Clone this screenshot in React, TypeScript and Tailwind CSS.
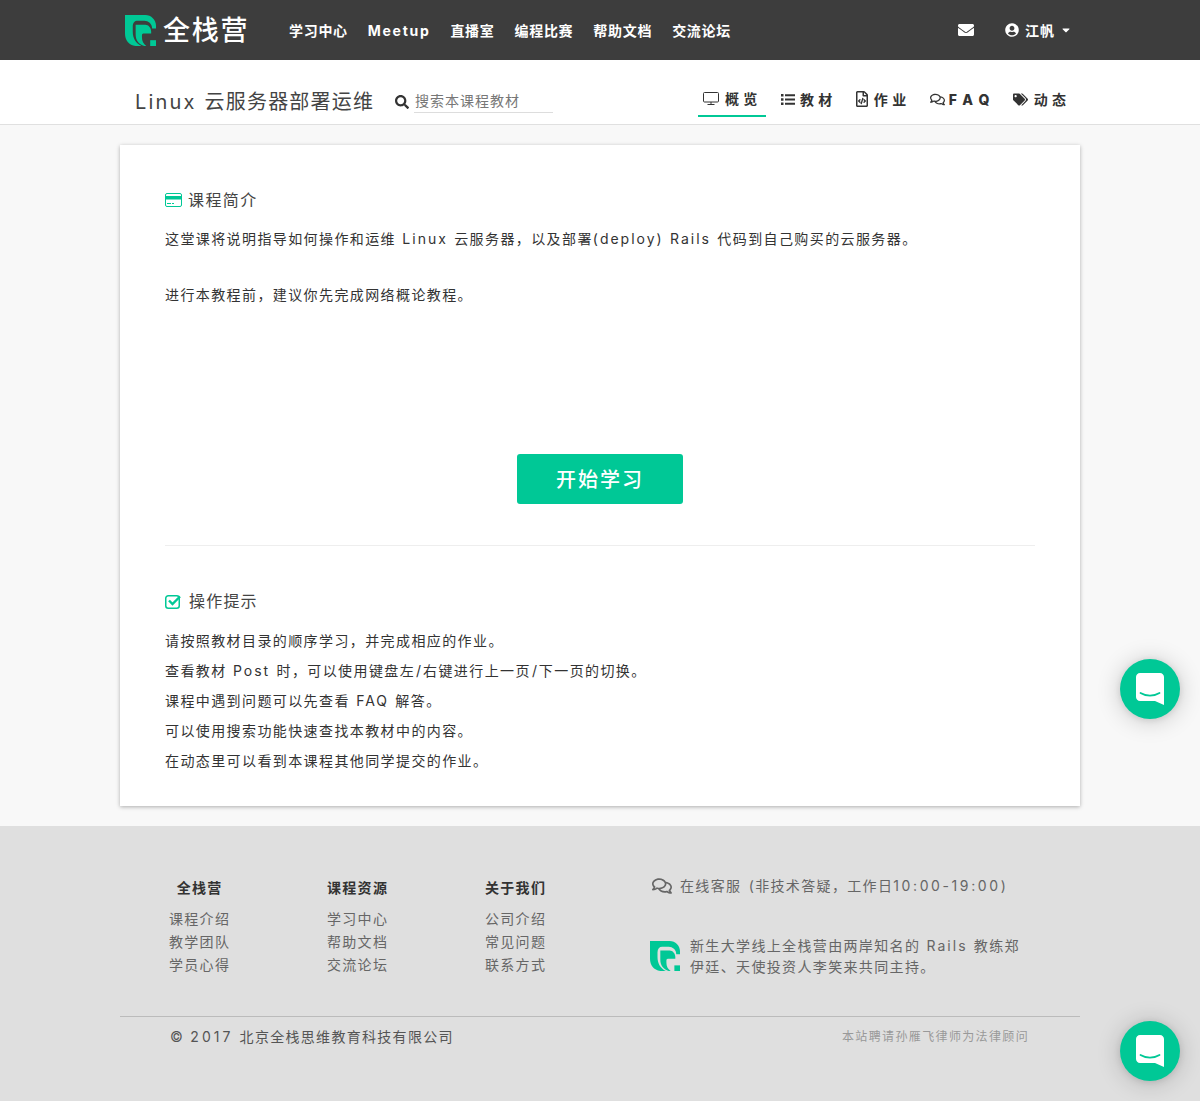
import React from "react";
import { FaEnvelope, FaSearch, FaTags, FaRegFileCode, FaRegComments, FaUserCircle, FaCaretDown } from "react-icons/fa";

const FONT = '"Inter", "Noto Sans CJK SC", sans-serif';

function Logo({ size }: { size: number }) {
  return (
    <svg width={size} height={size} viewBox="0 0 32 32">
      <path fill="#00c896" d="M0 0 H21 C27 0 32 5 32 11 V14 H28 C28 9 24 6 20 6 H13 C10 6 8 8 8 12 V17 C8 24 11 29 17 32 H11 C4 31 0 26 0 19 Z" />
      <path fill="#00c896" d="M11 10 H21 C24 10 27 13 27 17 V19 H19 C18 19 17.500 20 17.500 21 V23 C17.500 27 19 30 22 32 H20 C14 30 11 26 11 20 Z" />
      <rect x="26" y="26" width="6" height="6" fill="#00c896" />
    </svg>
  );
}

function Chat({ className }: { className: string }) {
  return (
    <div className={"absolute left-[1120px] w-[60px] h-[60px] rounded-full bg-[#00c896] flex items-center justify-center shadow-[0_1px_6px_rgba(0,0,0,0.1),0_2px_24px_rgba(0,0,0,0.2)] " + className}>
      <svg width="28" height="32" viewBox="0 0 28 32">
        <path fill="#fff" d="M4 0 H24 C26.200 0 28 1.800 28 4 V32 L19 28 H4 C1.800 28 0 26.200 0 24 V4 C0 1.800 1.800 0 4 0 Z" />
        <path fill="none" stroke="#00c896" strokeWidth="1.800" strokeLinecap="round" d="M4.500 20 C10 23.500 18 23.500 23.500 20" />
      </svg>
    </div>
  );
}

function L({ children }: { children: React.ReactNode }) {
  return <span className="tracking-[2px]">{children}</span>;
}

function S() {
  return <span className="ml-[1px] mr-[0.5px]">/</span>;
}

function Tab({ icon, label, className }: { icon: React.ReactNode; label: React.ReactNode; className: string }) {
  return (
    <div className={"flex items-center h-[36px] text-[14px] font-bold text-[#333] tracking-[0.5px] " + className}>
      {icon}
      <span>{label}</span>
    </div>
  );
}

function FooterCol({ title, items, className }: { title: string; items: string[]; className: string }) {
  return (
    <div className={"absolute top-[50px] " + className}>
      <div className="h-[31px] text-[14px] font-bold text-[#333] tracking-[1.3px] leading-[24px] text-center">{title}</div>
      {items.map((t) => (
        <div key={t} className="h-[23px] text-[14px] text-[#666] tracking-[1.3px] leading-[23px]">{t}</div>
      ))}
    </div>
  );
}

export default function App() {
  return (
    <div className="relative h-[1101px] overflow-hidden bg-[#f8f8f8]" style={{ fontFamily: FONT }}>
      <header className="h-[60px] bg-[#3d3d3d] flex items-center pl-[125px] text-white">
        <Logo size={31} />
        <span className="ml-[7px] text-[27px] font-medium tracking-[1.7px] w-[89px] leading-none whitespace-nowrap">全栈营</span>
        <nav className="ml-[37px] flex gap-[20px] text-[14px] font-bold tracking-[0.7px]">
          <span>学习中心</span>
          <span className="tracking-[1.7px]">Meetup</span>
          <span>直播室</span>
          <span>编程比赛</span>
          <span>帮助文档</span>
          <span>交流论坛</span>
        </nav>
        <FaEnvelope className="ml-[227px] text-[16px]" />
        <FaUserCircle className="ml-[31px] text-[14px]" />
        <span className="ml-[6px] text-[14px] font-bold tracking-[1px]">江帆</span>
        <FaCaretDown className="ml-[5px] text-[12px]" />
      </header>

      <div className="h-[65px] bg-white border-b border-[#e0e0e0] flex items-start pl-[135px]">
        <h1 className="mt-[27px] text-[20px] leading-[30px] text-[#444] tracking-[1.2px] w-[260px] whitespace-nowrap">
          <span className="tracking-[2.2px]">Linux</span>
          <span className="ml-[1px]"> 云服务器部署运维</span>
        </h1>
        <FaSearch className="mt-[35px] text-[14px] text-[#333]" />
        <div className="ml-[5px] mt-[31px] w-[139px] h-[22px] border-b border-[#ddd] text-[14px] leading-[20px] text-[#777] tracking-[1px] pl-[1px]">搜索本课程教材</div>
        <div className="ml-[145px] mt-[21px] flex">
          <Tab
            className="w-[68px] border-b-2 border-[#00c896] pl-[5px]"
            icon={
              <svg width="16" height="13" viewBox="0 0 16 13" className="mr-[6px]">
                <rect x="0.500" y="0.500" width="15" height="9.500" rx="1" fill="none" stroke="#333" />
                <path d="M8 10 V12 M4.500 12.500 H11.500" stroke="#333" fill="none" />
              </svg>
            }
            label="概 览"
          />
          <Tab
            className="ml-[15px]"
            icon={
              <svg width="14" height="11" viewBox="0 0 14 11" className="mr-[5px]">
                <path fill="#333" d="M0 0 H2.500 V2.500 H0 Z M0 4.200 H2.500 V6.700 H0 Z M0 8.400 H2.500 V10.900 H0 Z M4 0.300 H14 V2.300 H4 Z M4 4.500 H14 V6.500 H4 Z M4 8.700 H14 V10.700 H4 Z" />
              </svg>
            }
            label="教 材"
          />
          <Tab className="ml-[21px]" icon={<FaRegFileCode className="text-[16px] mr-[4px]" />} label="作 业" />
          <Tab className="ml-[23px]" icon={<FaRegComments className="text-[15px] mr-[4px]" />} label={<span className="tracking-[1.2px] font-extrabold">F A Q</span>} />
          <Tab className="ml-[22px]" icon={<FaTags className="text-[15px] mr-[6px]" />} label="动 态" />
        </div>
      </div>

      <main className="mx-[120px] mt-[20px] h-[661px] bg-white shadow-[0_1px_4px_rgba(0,0,0,0.3)] px-[45px] pt-[44px]">
        <div className="flex items-center h-[22px] text-[16px] text-[#444] tracking-[1.4px]">
          <svg width="17" height="14" viewBox="0 0 17 14" className="mr-[7px]">
            <rect x="0.500" y="0.500" width="16" height="13" rx="1.500" fill="none" stroke="#00c896" />
            <rect x="0" y="3" width="17" height="3.500" fill="#00c896" />
            <rect x="2" y="10" width="4" height="1" fill="#00c896" />
            <rect x="7" y="10" width="2" height="1" fill="#00c896" />
          </svg>
          <span className="-ml-[1px]">课程简介</span>
        </div>
        <div className="[word-spacing:1px] text-[14px] leading-[20px] text-[#333] tracking-[1.4px]">
          <p className="mt-[18px]">这堂课将说明指导如何操作和运维 <L>Linux</L> 云服务器，以及部署<L>(deploy)</L> <L>Rails</L> 代码到自己购买的云服务器。</p>
          <p className="mt-[36px]">进行本教程前，建议你先完成网络概论教程。</p>
        </div>

        <div className="mt-[149px] flex justify-center">
          <div className="w-[166px] h-[50px] pt-[2px] rounded-[3px] bg-[#00c896] text-white text-[20px] font-medium tracking-[2px] flex items-center justify-center">开始学习</div>
        </div>
        <div className="mt-[41px] border-t border-[#eee]" />

        <div className="mt-[44px] flex items-center h-[22px] text-[16px] text-[#444] tracking-[1.2px]">
          <svg width="17" height="15" viewBox="0 0 17 15" className="mr-[7px]">
            <rect x="0.750" y="1.750" width="13.500" height="12.500" rx="2.500" fill="none" stroke="#00c896" strokeWidth="1.500" />
            <path d="M4 6.500 L7.500 10 L15 2.500" fill="none" stroke="#00c896" strokeWidth="2.400" />
          </svg>
          <span>操作提示</span>
        </div>
        <div className="mt-[14px] [word-spacing:1px] text-[14px] leading-[30px] text-[#333] tracking-[1.4px]">
          <div>请按照教材目录的顺序学习，并完成相应的作业。</div>
          <div>查看教材 <L>Post</L> 时，可以使用键盘左<S />右键进行上一页<S />下一页的切换。</div>
          <div>课程中遇到问题可以先查看 <L>FAQ</L> 解答。</div>
          <div>可以使用搜索功能快速查找本教材中的内容。</div>
          <div>在动态里可以看到本课程其他同学提交的作业。</div>
        </div>
      </main>

      <footer className="relative mt-[20px] h-[275px] bg-[#dfdfdf]">
        <FooterCol className="left-[169px]" title="全栈营" items={["课程介绍", "教学团队", "学员心得"]} />
        <FooterCol className="left-[327px]" title="课程资源" items={["学习中心", "帮助文档", "交流论坛"]} />
        <FooterCol className="left-[485px]" title="关于我们" items={["公司介绍", "常见问题", "联系方式"]} />
        <div className="absolute left-[652px] top-[50px] flex items-center text-[14px] text-[#666] tracking-[1.35px] leading-[20px] [word-spacing:2px]">
          <FaRegComments className="text-[20px] mr-[8px]" />
          <span>在线客服 (非技术答疑，工作日<span className="tracking-[2.6px]">10:00-19:00)</span></span>
        </div>
        <div className="absolute left-[650px] top-[109px] flex items-center">
          <Logo size={30} />
          <div className="ml-[10px] text-[14px] leading-[21px] text-[#666] tracking-[1.35px] [word-spacing:1px] whitespace-nowrap">
            新生大学线上全栈营由两岸知名的 <L>Rails</L> 教练郑
            <br />
            伊廷、天使投资人李笑来共同主持。
          </div>
        </div>
        <div className="absolute left-[120px] right-[120px] top-[190px] border-t border-[#bbb]" />
        <div className="absolute left-[170px] top-[201px] text-[14px] leading-[20px] text-[#555] tracking-[1.3px] [word-spacing:1px]">
          © <span className="tracking-[3px]">2017</span> 北京全栈思维教育科技有限公司
        </div>
        <div className="absolute left-[842px] top-[201px] text-[12px] leading-[20px] text-[#999] tracking-[1.36px]">本站聘请孙雁飞律师为法律顾问</div>
      </footer>

      <Chat className="top-[659px]" />
      <Chat className="top-[1021px]" />
    </div>
  );
}
